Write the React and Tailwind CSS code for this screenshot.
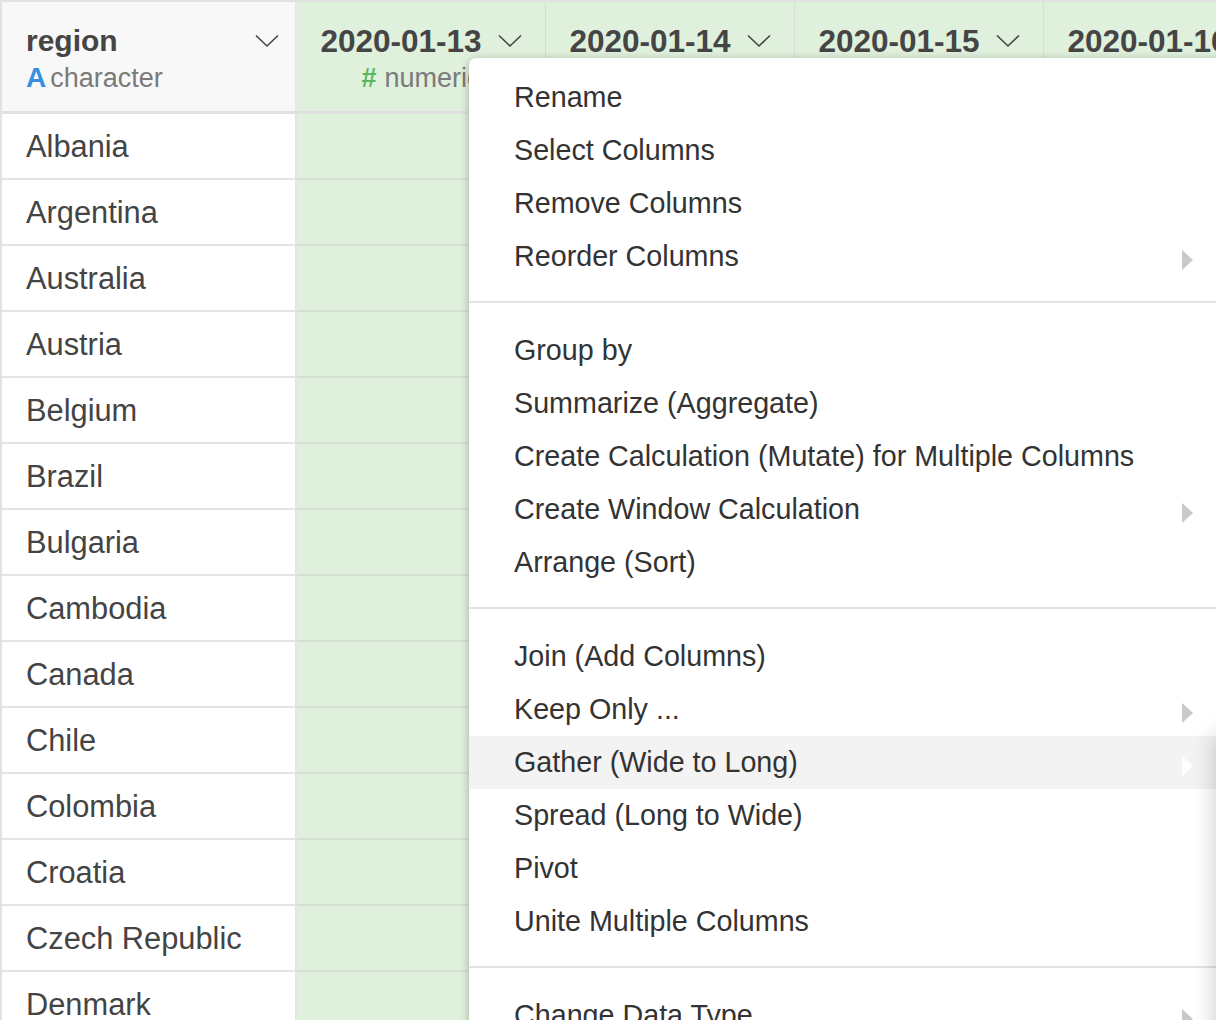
import { Fragment } from 'react';

const ROWS = [
  'Albania',
  'Argentina',
  'Australia',
  'Austria',
  'Belgium',
  'Brazil',
  'Bulgaria',
  'Cambodia',
  'Canada',
  'Chile',
  'Colombia',
  'Croatia',
  'Czech Republic',
  'Denmark',
  'Dominican Republic',
];

const DATES = ['2020-01-13', '2020-01-14', '2020-01-15', '2020-01-16'];

const SECTIONS = [
  [
    { label: 'Rename' },
    { label: 'Select Columns' },
    { label: 'Remove Columns' },
    { label: 'Reorder Columns', sub: true },
  ],
  [
    { label: 'Group by' },
    { label: 'Summarize (Aggregate)' },
    { label: 'Create Calculation (Mutate) for Multiple Columns' },
    { label: 'Create Window Calculation', sub: true },
    { label: 'Arrange (Sort)' },
  ],
  [
    { label: 'Join (Add Columns)' },
    { label: 'Keep Only ...', sub: true },
    { label: 'Gather (Wide to Long)', sub: true, active: true },
    { label: 'Spread (Long to Wide)' },
    { label: 'Pivot' },
    { label: 'Unite Multiple Columns' },
  ],
  [{ label: 'Change Data Type', sub: true }],
];

function Chevron() {
  return (
    <svg width="24" height="14" viewBox="0 0 24 14" fill="none" className="shrink-0">
      <polyline points="1,1.5 12,12 23,1.5" stroke="#444" strokeWidth="1.6" />
    </svg>
  );
}

function Arrow({ active }) {
  return (
    <svg width="11" height="20" viewBox="0 0 11 20" className="shrink-0 mt-[6px]">
      <polygon points="0,0 11,10 0,20" fill={active ? '#ffffff' : '#c9c9c9'} />
    </svg>
  );
}

export default function App() {
  return (
    <div className="relative w-[1216px] h-[1020px] overflow-hidden bg-white font-['Liberation_Sans',Arial,sans-serif]">
      <div className="border-t-2 border-l-2 border-[#e2e2e2]">
        {/* header */}
        <div className="flex h-[112px] border-b-[3px] border-[#e0e0e0]">
          <div className="w-[295px] shrink-0 border-r-2 border-[#e6e6e6] bg-[#f8f8f8] pl-[24px] pr-[16px] pt-[21px]">
            <div className="flex items-center justify-between">
              <span className="text-[30px] leading-[36px] font-bold text-[#454545]">region</span>
              <Chevron />
            </div>
            <div className="flex items-center mt-[1px] text-[27px] leading-[36px] text-[#7a7a7a]">
              <span className="font-bold text-[#3a8ee0] text-[28px] mr-[4px]">A</span>
              character
            </div>
          </div>
          {DATES.map((d) => (
            <div
              key={d}
              className="w-[249px] shrink-0 border-r border-[#d3dfd1] bg-[#dff0dc] pt-[21px] flex flex-col items-center"
            >
              <div className="flex items-center gap-[16px] whitespace-nowrap">
                <span className="text-[31.5px] leading-[36px] font-bold text-[#454545]">{d}</span>
                <Chevron />
              </div>
              <div className="flex items-center mt-[1px] text-[27px] leading-[36px] text-[#7a7a7a] whitespace-nowrap">
                <span className="font-bold text-[#5cb85c] mr-[8px]">#</span>
                numeric
              </div>
            </div>
          ))}
        </div>

        {/* body */}
        {ROWS.map((r) => (
          <div key={r} className="flex h-[66px]">
            <div className="w-[295px] shrink-0 border-r-2 border-b-2 border-[#e4e4e4] pl-[24px] pt-[2px] flex items-center text-[30.8px] text-[#444]">
              {r}
            </div>
            {DATES.map((d) => (
              <div key={d} className="w-[249px] shrink-0 border-r border-b-2 border-[#d6e0d4] bg-[#dff0dc]" />
            ))}
          </div>
        ))}
      </div>

      {/* context menu */}
      <div className="absolute left-[469px] top-[58px] w-[760px] bg-white rounded-tl-[7px] shadow-[0_2px_10px_rgba(0,0,0,0.28)] text-[28.7px] text-[#333]">
        {SECTIONS.map((items, i) => (
          <Fragment key={i}>
            {i > 0 && <div className="h-[2px] bg-[#e3e3e3]" />}
            <div className={i === 0 ? 'pt-[13px] pb-[18px]' : 'pt-[21px] pb-[18px]'}>
              {items.map((it) => (
                <div
                  key={it.label}
                  className={`flex items-center justify-between h-[53px] pl-[45px] pr-[36px] whitespace-nowrap ${
                    it.active ? 'bg-[#f3f3f3]' : ''
                  }`}
                >
                  <span>{it.label}</span>
                  {it.sub && <Arrow active={it.active} />}
                </div>
              ))}
            </div>
          </Fragment>
        ))}
      </div>

      {/* submenu just off the right edge */}
      <div className="absolute left-[1216px] top-[734px] w-[300px] h-[400px] bg-white shadow-[0_0_22px_rgba(0,0,0,0.22)]" />
    </div>
  );
}
